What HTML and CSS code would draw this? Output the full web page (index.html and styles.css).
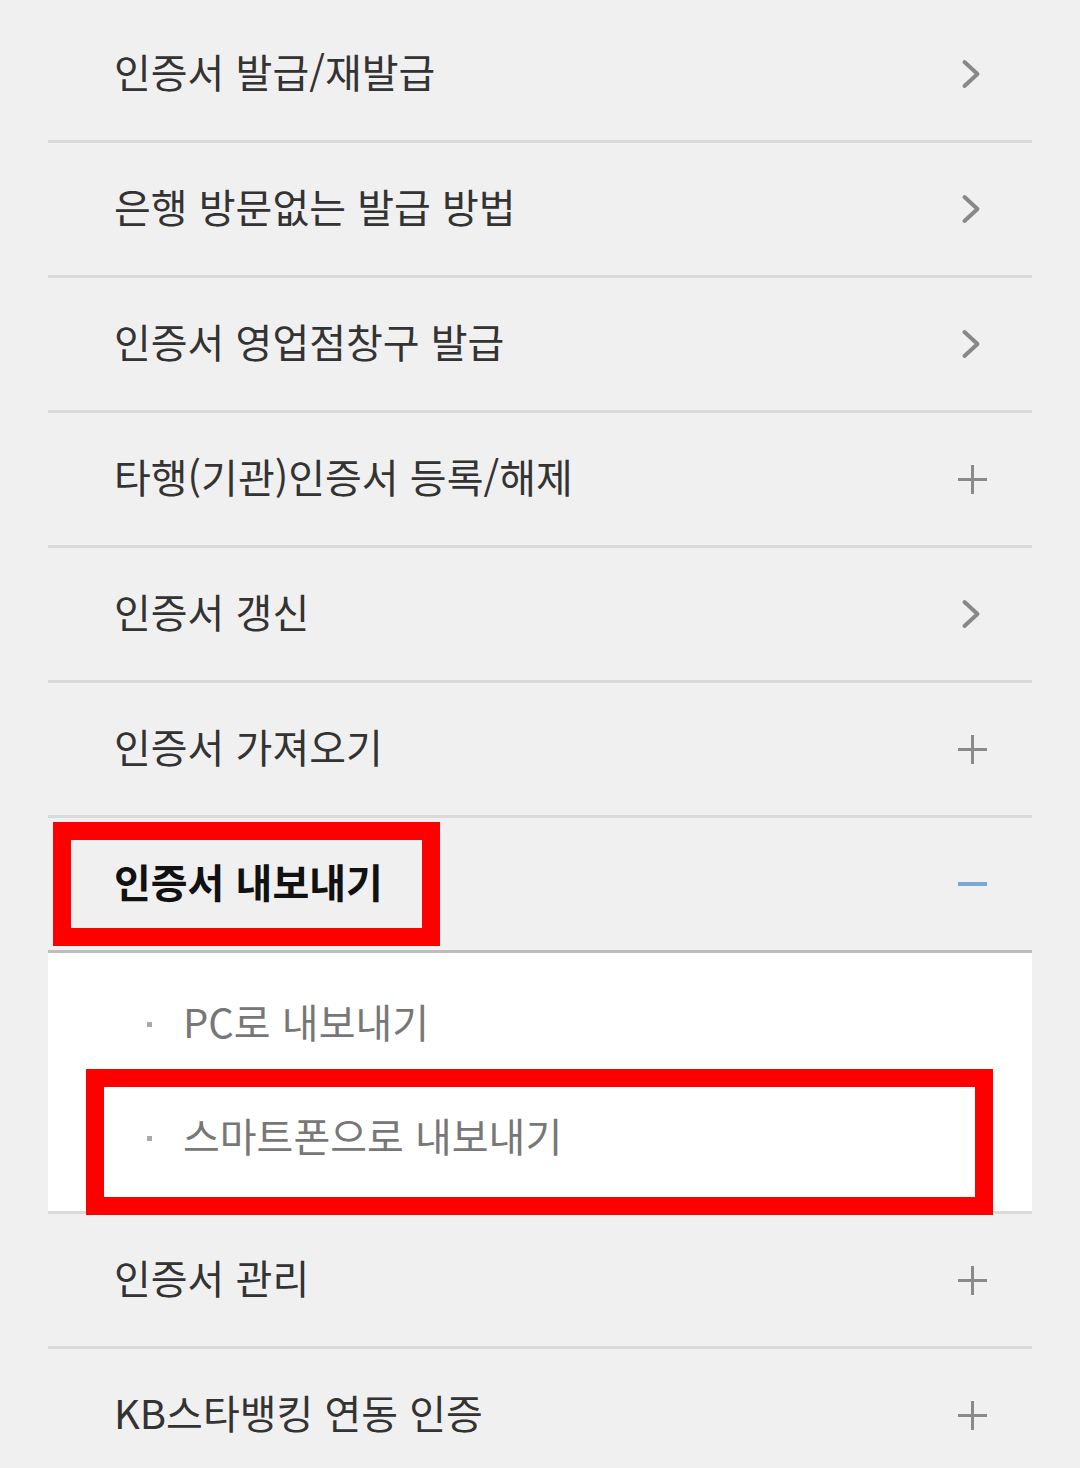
FILE: index.html
```html
<!DOCTYPE html>
<html lang="ko">
<head>
<meta charset="utf-8">
<link rel="stylesheet" href="styles.css">
</head>
<body>
<ul class="menu">
  <li class="row"><span class="label">인증서 발급/재발급</span><span class="ico chev"><svg viewBox="0 0 20 30" width="20" height="30"><path d="M3.5 3 L16.5 15 L3.5 27" fill="none" stroke="#888" stroke-width="4" stroke-linecap="round" stroke-linejoin="round"/></svg></span></li>
  <li class="row"><span class="label">은행 방문없는 발급 방법</span><span class="ico chev"><svg viewBox="0 0 20 30" width="20" height="30"><path d="M3.5 3 L16.5 15 L3.5 27" fill="none" stroke="#888" stroke-width="4" stroke-linecap="round" stroke-linejoin="round"/></svg></span></li>
  <li class="row"><span class="label">인증서 영업점창구 발급</span><span class="ico chev"><svg viewBox="0 0 20 30" width="20" height="30"><path d="M3.5 3 L16.5 15 L3.5 27" fill="none" stroke="#888" stroke-width="4" stroke-linecap="round" stroke-linejoin="round"/></svg></span></li>
  <li class="row"><span class="label">타행(기관)인증서 등록/해제</span><span class="ico plus"></span></li>
  <li class="row"><span class="label">인증서 갱신</span><span class="ico chev"><svg viewBox="0 0 20 30" width="20" height="30"><path d="M3.5 3 L16.5 15 L3.5 27" fill="none" stroke="#888" stroke-width="4" stroke-linecap="round" stroke-linejoin="round"/></svg></span></li>
  <li class="row"><span class="label">인증서 가져오기</span><span class="ico plus"></span></li>
  <li class="row open"><span class="label">인증서 내보내기</span><span class="ico minus"></span><span class="mark mark-head"></span></li>
  <li class="sub">
    <div class="sub-item"><span class="dot"></span><span class="sub-label">PC로 내보내기</span></div>
    <div class="sub-item"><span class="dot"></span><span class="sub-label">스마트폰으로 내보내기</span><span class="mark mark-sub"></span></div>
  </li>
  <li class="row"><span class="label">인증서 관리</span><span class="ico plus"></span></li>
  <li class="row"><span class="label">KB스타뱅킹 연동 인증</span><span class="ico plus"></span></li>
</ul>
</body>
</html>
```

FILE: styles.css
```css
html, body {
  background: #f0f0f0;
}
body {
  margin: 8px 0 0 0;
  font-family: "Noto Sans CJK KR", "Noto Sans", sans-serif;
}
.menu {
  list-style: none;
  margin: 0 48px;
  padding: 0;
  width: 984px;
}
.row {
  position: relative;
  height: 132px;
  border-bottom: 3px solid #dadada;
  display: flex;
  align-items: center;
  justify-content: space-between;
  padding: 0 45px 0 66px;
}
.label {
  font-size: 40px;
  color: #333;
  line-height: 1;
  margin-top: -6px;
}
.row.open {
  border-bottom-color: #bdbdbd;
}
.row.open .label {
  font-weight: 700;
  color: #111;
}
.ico {
  position: relative;
  width: 29px;
  height: 29px;
  display: flex;
  align-items: center;
  justify-content: center;
}
.chev {
  margin-right: 2px;
  margin-top: -1px;
}
.plus::before, .plus::after {
  content: "";
  position: absolute;
  background: #8a8a8a;
}
.plus::before {
  left: 0; right: 0; top: 13px; height: 3px;
}
.plus::after {
  top: 0; bottom: 0; left: 13px; width: 3px;
}
.minus::before {
  content: "";
  position: absolute;
  left: 0; right: 0; top: 12px; height: 4px;
  background: #76a9d6;
}
.sub {
  background: #ffffff;
  padding: 14px 0 16px 0;
  border-bottom: 3px solid #dadada;
}
.sub-item {
  position: relative;
  height: 114px;
  display: flex;
  align-items: center;
  padding-left: 99px;
}
.dot {
  width: 5px;
  height: 5px;
  background: #aaaaaa;
  margin-right: 31px;
}
.sub-label {
  font-size: 40px;
  color: #777;
  line-height: 1;
  margin-top: -6px;
}
.mark {
  position: absolute;
  border: 18px solid #ff0000;
  box-sizing: border-box;
}
.mark-head {
  left: 5px;
  top: 4px;
  width: 387px;
  height: 124px;
}
.mark-sub {
  left: 38px;
  top: -12px;
  width: 907px;
  height: 146px;
}
```
